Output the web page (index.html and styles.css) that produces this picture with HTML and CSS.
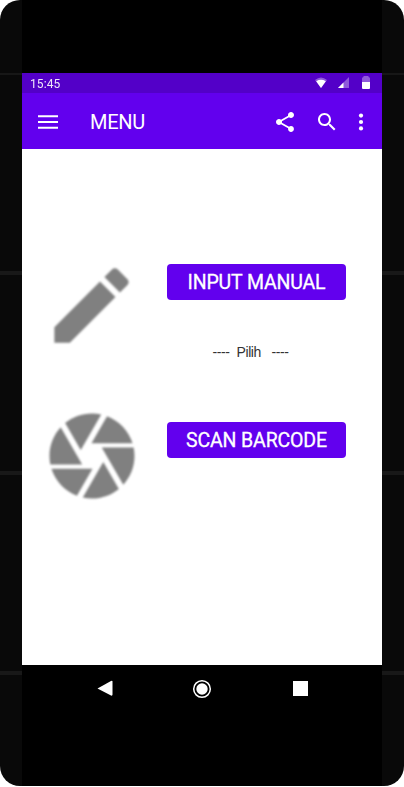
FILE: index.html
```html
<!DOCTYPE html>
<html lang="id">
<head>
<meta charset="utf-8">
<title>Menu</title>
<link rel="stylesheet" href="styles.css">
</head>
<body>
<div class="phone">
  <div class="screen">
    <div class="status">
      <span class="clock">15:45</span>
      <svg class="status-icons" width="56" height="14" viewBox="0 0 56 14">
        <path fill="#fff" fill-opacity=".35" d="M0 4Q6 -1 12 4L6 12Z"/>
        <path fill="#fff" d="M1.2 5.2Q6 2.4 10.8 5.2L6 12Z"/>
        <path fill="#fff" fill-opacity=".35" d="M34 1V12H23Z"/>
        <path fill="#fff" d="M28.5 6.5V12H23Z"/>
        <path fill="#fff" fill-opacity=".35" d="M47 6V2.5Q47 1 48.5 1V0H53.5V1Q55 1 55 2.5V6Z"/>
        <path fill="#fff" d="M47 6H55V12Q55 13 54 13H48Q47 13 47 12Z"/>
      </svg>
    </div>
    <header class="appbar">
      <svg class="menu-icon" width="20" height="14" viewBox="0 0 20 14"><path fill="#fff" d="M0 .3H20V2.3H0ZM0 6H20V8H0ZM0 11.7H20V13.7H0Z"/></svg>
      <h1 class="title">MENU</h1>
      <svg class="icon share" viewBox="0 0 24 24"><path d="M18 16.08c-.76 0-1.44.3-1.96.77L8.91 12.7c.05-.23.09-.46.09-.7s-.04-.47-.09-.7l7.05-4.11c.54.5 1.25.81 2.04.81 1.66 0 3-1.34 3-3s-1.34-3-3-3-3 1.34-3 3c0 .24.04.47.09.7L8.04 9.81C7.5 9.31 6.79 9 6 9c-1.66 0-3 1.34-3 3s1.34 3 3 3c.79 0 1.5-.31 2.04-.81l7.12 4.16c-.05.21-.08.43-.08.65 0 1.61 1.31 2.92 2.92 2.92s2.92-1.31 2.92-2.92-1.31-2.92-2.92-2.92z"/></svg>
      <svg class="icon search" viewBox="0 0 24 24"><path d="M15.5 14h-.79l-.28-.27C15.41 12.59 16 11.11 16 9.5 16 5.91 13.09 3 9.5 3S3 5.91 3 9.5 5.91 16 9.5 16c1.61 0 3.09-.59 4.23-1.57l.27.28v.79l5 4.99L20.49 19l-4.99-5zm-6 0C7.01 14 5 11.99 5 9.5S7.01 5 9.5 5 14 7.01 14 9.5 11.99 14 9.5 14z"/></svg>
      <svg class="icon more" viewBox="0 0 24 24"><circle cx="12" cy="5.6" r="2.1"/><circle cx="12" cy="12" r="2.1"/><circle cx="12" cy="18.4" r="2.1"/></svg>
    </header>
    <main class="content">
      <svg class="art pencil" viewBox="0 0 24 24"><path d="M3 17.25V21h3.75L17.81 9.94l-3.75-3.75L3 17.25zM20.71 7.04c.39-.39.39-1.02 0-1.41l-2.34-2.34c-.39-.39-1.02-.39-1.41 0l-1.83 1.83 3.75 3.75 1.83-1.83z"/></svg>
      <button class="button">INPUT MANUAL</button>
      <p class="hint">----  Pilih   ----</p>
      <svg class="art shutter" viewBox="0 0 24 24"><path d="M9.4 10.5l4.77-8.26C13.47 2.09 12.75 2 12 2c-2.4 0-4.6.85-6.32 2.25l3.66 6.35.06-.1zM21.54 9c-.92-2.92-3.15-5.26-6-6.34L11.88 9h9.66zm.26 1h-7.49l.29.5 4.76 8.25C21 16.97 22 14.61 22 12c0-.69-.07-1.35-.2-2zM8.54 12l-3.9-6.75C3.01 7.03 2 9.39 2 12c0 .69.07 1.35.2 2h7.49l-1.15-2zm-6.08 3c.92 2.92 3.15 5.26 6 6.34L12.12 15H2.46zm11.27 0l-3.9 6.76c.7.15 1.42.24 2.17.24 2.4 0 4.6-.85 6.32-2.25l-3.66-6.35-.93 1.6z"/></svg>
      <button class="button scan">SCAN BARCODE</button>
    </main>
    <nav class="nav">
      <svg width="16" height="20" viewBox="0 0 16 20"><path fill="#fff" d="M.5 9.5 14 2Q15.5 1.5 15.5 2.5V15.500Q15.500 17 14 16.500Z"/></svg>
      <svg width="20" height="20" viewBox="0 0 20 20"><circle cx="10" cy="10" r="8.300" fill="none" stroke="#fff" stroke-width="1.500"/><circle cx="10" cy="10" r="5.700" fill="#fff"/></svg>
      <span class="square"></span>
    </nav>
  </div>
</div>
</body>
</html>
```
FILE: styles.css
```css
body {
  margin: 0;
  background: #fff;
  font-family: Roboto, sans-serif;
}
.phone {
  box-sizing: border-box;
  height: 786px;
  padding: 0 22px;
  border-radius: 20px;
  overflow: hidden;
  background: linear-gradient(#171717, #171717) 0 73px / 100% 2px no-repeat,
    linear-gradient(#181818, #181818) 0 271px / 100% 4px no-repeat,
    linear-gradient(#181818, #181818) 0 471px / 100% 4px no-repeat,
    linear-gradient(#181818, #181818) 0 671px / 100% 4px no-repeat,
    #090909;
}
.screen {
  box-sizing: border-box;
  height: 786px;
  padding-top: 73px;
  background: #000;
}
.status {
  display: flex;
  justify-content: space-between;
  height: 20px;
  padding: 0 11px 0 8px;
  background: #5300c8;
  color: #fff;
}
.clock {
  font-size: 12px;
  line-height: 22px;
  letter-spacing: .1px;
  opacity: .9;
}
.status-icons { margin-top: 3px; }
.appbar {
  display: flex;
  align-items: center;
  height: 56px;
  padding: 0 9px 0 16px;
  background: #6200ee;
  color: #fff;
}
.menu-icon { margin-top: 2px; }
.title {
  flex: 1;
  margin: 2px 0 0 32px;
  font-size: 20px;
  font-weight: 400;
  letter-spacing: -.3px;
  line-height: 24px;
}
.icon {
  width: 24px;
  height: 24px;
  margin-top: 2px;
  fill: #fff;
}
.search { margin-left: 18px; }
.more { margin-left: 10px; }
.content {
  display: grid;
  box-sizing: border-box;
  height: 516px;
  grid-template-columns: 102px 179px;
  grid-template-rows: 102px 48px 102px;
  column-gap: 24px;
  align-content: start;
  padding: 105px 0 0 19px;
  background: #fff;
}
.art {
  width: 102px;
  height: 102px;
  fill: #808080;
  filter: blur(.9px);
}
.pencil {
  width: 99px;
  height: 99px;
  margin: 2px 0 0 1px;
}
.shutter { margin-top: 1px; }
.button {
  height: 36px;
  margin: 10px 0 0;
  padding: 0;
  border: 0;
  border-radius: 4px;
  background: #6200ee;
  color: #fff;
  font: 400 19.5px/37px Roboto, sans-serif;
  letter-spacing: -.15px;
  -webkit-text-stroke: .3px #fff;
}
.scan { margin-top: 18px; }
.hint {
  grid-column: 2;
  margin: -14px 0 0 -12px;
  text-align: center;
  white-space: pre;
  color: #333;
  font: 14px/20px "Liberation Sans", sans-serif;
  letter-spacing: -.4px;
}
.nav {
  display: flex;
  justify-content: space-between;
  align-items: center;
  padding: 14px 74px 0 73px;
}
.nav svg:first-child { margin-left: 2px; margin-right: -2px; }
.square {
  width: 15px;
  height: 15px;
  margin-bottom: 1px;
  background: #fff;
}
```
